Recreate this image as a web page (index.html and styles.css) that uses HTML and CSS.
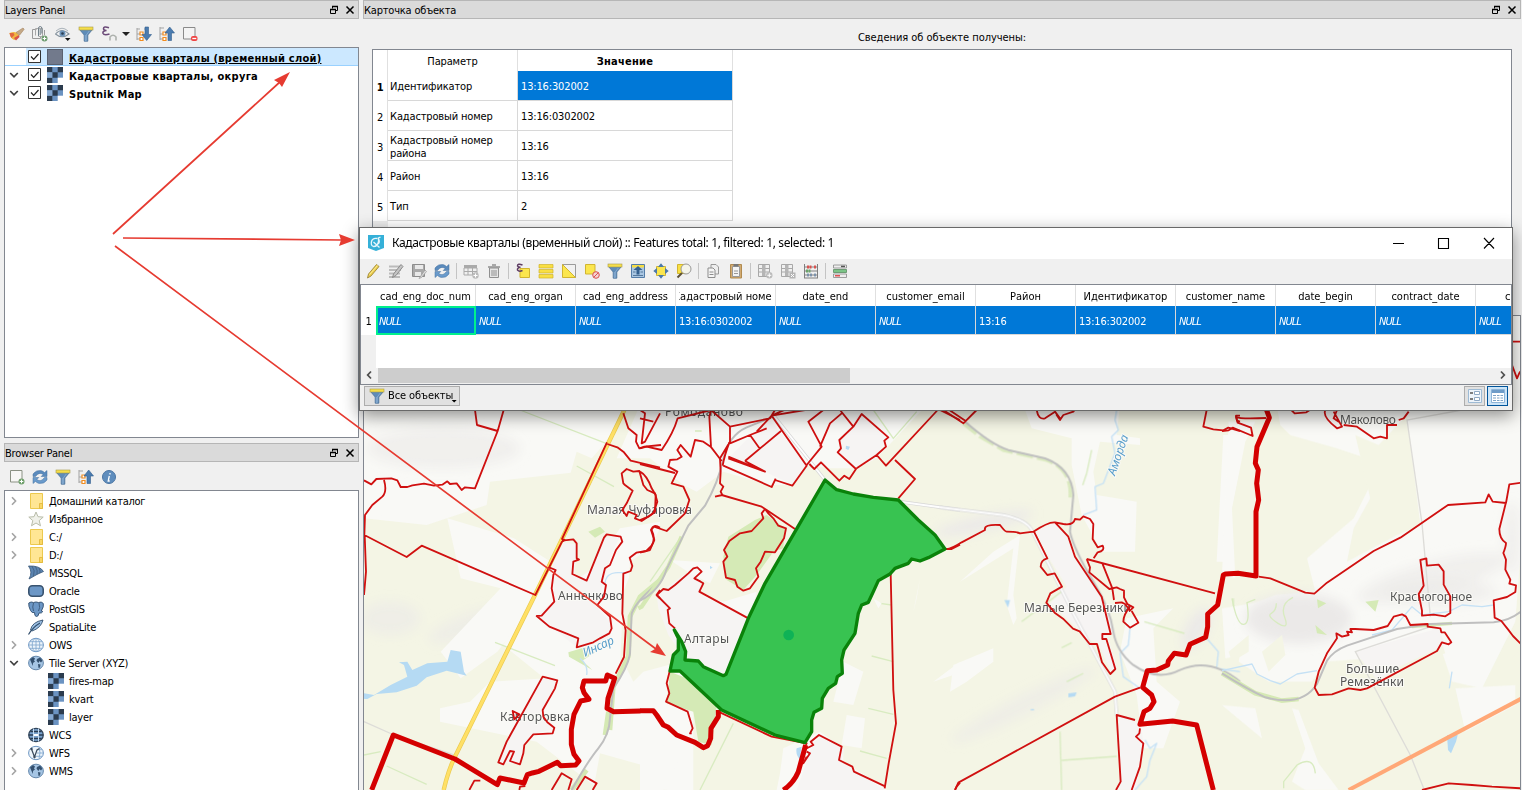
FILE: index.html
```html
<!DOCTYPE html>
<html lang="ru">
<head>
<meta charset="utf-8">
<title>QGIS</title>
<link rel="stylesheet" href="styles.css">
</head>
<body>
<svg class="defs" width="0" height="0">
  <defs>
    <symbol id="funnel" viewBox="0 0 16 16"><path d="M1.5 3.5L6.2 9v6.2h3.6V9l4.7-5.500z" fill="#5f8cb8" stroke="#4a7199" stroke-width=".8"/><path d="M7.300 9v5.500h1V9l3-4" fill="none" stroke="#8fb3d6" stroke-width=".8"/><rect x="1" y="1" width="14" height="3" fill="#f5de4a" stroke="#a79a4a" stroke-width=".6"/></symbol>
    <symbol id="refresh" viewBox="0 0 16 16"><path d="M1 7.500V5Q4 .8 9 1.600q2 .4 3.500 2L15 1.500v6H9.200l2-2Q7 2.500 3.500 7.500z" fill="#5b8bbd" stroke="#44719f" stroke-width=".5"/><path d="M15 8.500V11q-3 4.200-8 3.400-2-.4-3.500-2L1 14.500v-6h5.800l-2 2q4.200 3 7.700-2z" fill="#6a9bcc" stroke="#44719f" stroke-width=".5"/></symbol>
    <symbol id="tiles" viewBox="0 0 16 16"><rect width="16" height="16" fill="#6b93c2"/><path d="M0 0h5.300v5.300H0zM10.700 0H16v5.300h-5.300zM5.300 5.300h5.400v5.400H5.300zM0 10.700h5.300V16H0z" fill="#2b3b4e"/><path d="M0 5.300h5.300v5.400H0z" fill="#86a9d2"/><path d="M10.700 10.700H16V16h-5.300z" fill="#fff"/></symbol>
    <symbol id="folder" viewBox="0 0 16 16"><path d="M2.500.5h12v15h-12z" fill="#ffe694" stroke="#ecc94e"/><path d="M11.500 10.500h3v5h-3z" fill="#f9d765" stroke="#dfb538" stroke-width=".8"/></symbol>
    <symbol id="star" viewBox="0 0 16 16"><path d="M8 1l2 4.700 5.200.4-4 3.500 1.300 5.200L8 12l-4.500 2.800 1.300-5.200-4-3.500L6 5.700z" fill="#f0f1ea" stroke="#b9bdaa"/></symbol>
    <symbol id="mssql" viewBox="0 0 16 16"><path d="M.5 1Q12 .5 15.500 6.500 10 8.500 1 14 5 7 .5 1z" fill="#5b84b1" stroke="#3a5877" stroke-width=".8"/><path d="M4 1q3.500 4.500 1.500 10M7.500 1.600q2.500 4 1.500 7.800M11 3q1.500 3 1 5" fill="none" stroke="#3a5877" stroke-width=".7"/></symbol>
    <symbol id="oracle" viewBox="0 0 16 16"><rect x=".8" y="2.800" width="14.400" height="10.400" rx="3.500" fill="#6c97c6" stroke="#39536f" stroke-width="1.600"/></symbol>
    <symbol id="postgis" viewBox="0 0 16 16"><path d="M.8 2Q3 .3 5.500 1.500q2.500-1 5 0 3-1.300 4.800 1 .8 3-2 7.500l1.500.5q-1 2-3.800 1.500-.5 3.500-2.500 3.500-2 0-2-4-2.500 1-4-2Q.3 5 .8 2z" fill="#6c97c6" stroke="#3b5878"/><path d="M5.500 2q-1.500 4 0 8M11 2q1.500 5-.5 8" fill="none" stroke="#3b5878" stroke-width=".9"/></symbol>
    <symbol id="feather" viewBox="0 0 16 16"><path d="M2.500 11Q4 3 15 1q-2 8-11 11z" fill="#9dc0e4" stroke="#304d6c" stroke-width=".9"/><path d="M.5 15.500Q5 8 12 4" fill="none" stroke="#304d6c" stroke-width="1.200"/></symbol>
    <symbol id="globe" viewBox="0 0 16 16"><ellipse cx="8" cy="8" rx="7.400" ry="6.700" fill="#eef5fb" stroke="#6c95c2"/><path d="M.8 8h14.400M2 4.700h12M2 11.300h12M8 1.300v13.400" fill="none" stroke="#7ba3cc" stroke-width=".8"/><ellipse cx="8" cy="8" rx="3.800" ry="6.700" fill="none" stroke="#7ba3cc" stroke-width=".8"/></symbol>
    <symbol id="globe2" viewBox="0 0 16 16"><ellipse cx="8" cy="8" rx="7.400" ry="6.800" fill="#a5c5e4" stroke="#6487ab"/><path d="M2 4.500L5 2l2 1.500L6 5.500l1 1L5 8v3L3.500 8zM9 4l3-1.500 2.500 3-1.500 2-1.500-1.500L10.500 8l-1-1L8.500 5.500zM10 9l2.500.5-.5 3-1.500.5z" fill="#33506f"/></symbol>
    <symbol id="wcs" viewBox="0 0 16 16"><ellipse cx="8" cy="8" rx="7.300" ry="6.700" fill="#7ba4d0" stroke="#33465b" stroke-width="1.300"/><path d="M1 8h14M2.500 4.500h11M2.500 11.500h11" stroke="#2b3d52" stroke-width="1.600"/><path d="M5.500 1.500v13M10.500 1.500v13" stroke="#c7dcf0"/><path d="M6 7h4v2H6z" fill="#fff"/></symbol>
    <symbol id="wfs" viewBox="0 0 16 16"><ellipse cx="8" cy="8" rx="7.400" ry="6.700" fill="#eef5fb" stroke="#6c95c2"/><path d="M9 8h6M9 4.700h5M8 11.300h6M11 2.500q2 5 0 11" fill="none" stroke="#7ba3cc" stroke-width=".8"/><path d="M3.500 4l3 8 2.500-7 2.500-1.500" fill="none" stroke="#3a4a5c" stroke-width="1.200"/><circle cx="3.500" cy="4" r="1.200" fill="#3a4a5c"/><circle cx="6.500" cy="12" r="1.200" fill="#3a4a5c"/></symbol>
    <symbol id="expand" viewBox="0 0 16 16"><path d="M1 2v12M1 3h3M1 8h3M1 13h3M8 3h2M8 8h2" fill="none" stroke="#a3a3a3"/><path d="M4 6h3v3H4zM4 11.500h3v3H4z" fill="#fff" stroke="#f28c1e" stroke-width="1.200"/><path d="M9 1h3.500v7.500H15.500L10.700 14.500 6 8.500h3z" fill="#4b7cb0" stroke="#345f8e" stroke-width=".6"/></symbol>
    <symbol id="collapse" viewBox="0 0 16 16"><path d="M1 1v13M1 2h4M1 8h3M1 13h3" fill="none" stroke="#a3a3a3"/><path d="M4 6h3v3H4zM4 11.500h3v3H4z" fill="#fff" stroke="#f28c1e" stroke-width="1.200"/><path d="M9 14.500h3.500V7H15.500L10.700 1 6 7h3z" fill="#4b7cb0" stroke="#345f8e" stroke-width=".6"/></symbol>
    <symbol id="brush" viewBox="0 0 16 16"><path d="M.5 7q4-1.500 7-.5l2.500 3L6.500 14q-4 0-5.500-5z" fill="#f1b640"/><path d="M.5 7h4l1 2-3 3Q1 10 .5 7z" fill="#e0683f"/><path d="M5 12l5-3 .5 2L7 14.500z" fill="#d9534a"/><path d="M7 6.500L14 2l1.200 1.200-4.700 6z" fill="#c5a988" stroke="#a5855f" stroke-width=".6"/></symbol>
    <symbol id="addgroup" viewBox="0 0 16 16"><path d="M4.500 3.500h-4v9h8V11" fill="none" stroke="#9a9a9a"/><path d="M3.500 9.500V2.500h7v8h-4" fill="none" stroke="#a8a8a8"/><path d="M6.500 10V2.500q0-2 1.700-2t1.700 2v5M8.200 3v6" fill="none" stroke="#6f7f88"/><path d="M12.500 4v5" stroke="#999"/><circle cx="12.500" cy="12.500" r="3" fill="#6e9b6e"/><path d="M12.500 10.700v3.600M10.700 12.500h3.600" stroke="#fff"/></symbol>
    <symbol id="eye" viewBox="0 0 16 16"><path d="M.5 8Q7 1 14 8 7 13.500.5 8z" fill="#f2f2f2" stroke="#85939e" stroke-width="1.100"/><circle cx="7.500" cy="7.500" r="3" fill="#6c93b9"/><circle cx="7.500" cy="7.500" r="1.300" fill="#2c3e52"/><path d="M1 5q6-5.500 12 0" fill="none" stroke="#aab3ba"/><path d="M10 12h5.500L12.700 15z" fill="#111"/></symbol>
    <symbol id="eps" viewBox="0 0 16 16"><path d="M8 1.800Q2.500-.2 2.500 2.800q.3 1.700 3 1.700Q1.500 5 2 7.200q1 2.600 6.500.8" fill="none" stroke="#6b4a78" stroke-width="1.600"/><path d="M9 14.500V11q3-3.500 6 0v3.500" fill="none" stroke="#aeb2ae" stroke-width="1.600"/></symbol>
    <symbol id="remove" viewBox="0 0 16 16"><path d="M1.500 1.500h11.500v11.500H1.500z" fill="#f4f4f4" stroke="#8a8a8a"/><rect x="9" y="10" width="6.500" height="5" rx="2" fill="#ef4444"/><path d="M10.300 12.500h4" stroke="#fff" stroke-width="1.300"/></symbol>
    <symbol id="addsel" viewBox="0 0 16 16"><path d="M1.500 1.500h11.500v11.500H1.500z" fill="#f7f7f5" stroke="#8a9183"/><circle cx="12.500" cy="12.500" r="3" fill="#6e9f6a"/><path d="M12.500 10.700v3.600M10.700 12.500h3.600" stroke="#fff"/></symbol>
    <symbol id="pencil" viewBox="0 0 16 16"><path d="M2.500 15l1-4L11.500 1.500l2.500 2-8 9.500z" fill="#edcf4b" stroke="#9e873a" stroke-width=".9"/><path d="M4.500 11.500L12.500 2.500" stroke="#fbeb99"/></symbol>
    <symbol id="edits" viewBox="0 0 16 16"><path d="M1 3.500h13M1 7h12M1 10.500h11M1 14h11" stroke="#bbb" stroke-width="2.200"/><path d="M4.500 14.500l1-3.500 7.500-9.500L15 3.500l-7 9z" fill="#c4c4c4" stroke="#858585" stroke-width=".9"/></symbol>
    <symbol id="save" viewBox="0 0 16 16"><path d="M1.500 1.500h12v12h-12z" fill="#a9a9a9" stroke="#8d8d8d"/><path d="M4 2h8v4H4zM4 9h6v4H4z" fill="#e9e9e9"/><path d="M8 15.500l6-8.500 1.500 1.500-5 6z" fill="#ddd" stroke="#999" stroke-width=".7"/></symbol>
    <symbol id="tableadd" viewBox="0 0 16 16"><path d="M1 2h13v3H1z" fill="#aaa"/><path d="M1 5h13v7H1zM1 8.500h13M5 5v7M9.500 5v7" fill="none" stroke="#aaa"/><circle cx="12.500" cy="12.500" r="3.200" fill="#bbb"/><path d="M12.500 10.500v4M10.500 12.500h4" stroke="#fff"/></symbol>
    <symbol id="trash" viewBox="0 0 16 16"><path d="M3.500 5h9v9.500h-9zM6 7v6M8 7v6M10 7v6" fill="#e6e6e6" stroke="#909090"/><path d="M2 4h12M6 2h4" stroke="#909090" stroke-width="1.500"/></symbol>
    <symbol id="epsy" viewBox="0 0 16 16"><path d="M5 5.500h9.500v9H5z" fill="#fbe64e" stroke="#d1b530"/><path d="M7.500 2Q2.500 0 2.500 3q.5 1.300 3 1.300Q2 4.800 2.500 7q1.500 2 5 .5" fill="none" stroke="#5d3b62" stroke-width="1.500"/></symbol>
    <symbol id="selall" viewBox="0 0 16 16"><path d="M1 1.500h14V5H1zM1 6.500h14V10H1zM1 11.500h14V15H1z" fill="#f9df42" stroke="#cfb32c" stroke-width=".7"/></symbol>
    <symbol id="invert" viewBox="0 0 16 16"><path d="M1.500 1.500h13v13z" fill="#f1f1f1" stroke="#9b9b9b"/><path d="M1.500 1.500v13h13z" fill="#fbe64e" stroke="#d1b530"/></symbol>
    <symbol id="desel" viewBox="0 0 16 16"><path d="M1.500 1.500h9.500v9.500H1.500z" fill="#fbe64e" stroke="#d1b530"/><circle cx="12" cy="12" r="3.300" fill="#f6d2d2" stroke="#d9534f"/><path d="M9.700 14.300l4.600-4.600" stroke="#d9534f"/></symbol>
    <symbol id="movetop" viewBox="0 0 16 16"><path d="M1.500 1.500h13v13h-13z" fill="#a9c6e2" stroke="#547da8"/><path d="M2 2h12v2.500H2z" fill="#f5dc45"/><path d="M8 3l4.500 4H9.500v4.500h-3V7h-3z" fill="#335f8e"/><path d="M3 9h2.500M10.500 9H13M3 12.500h10" stroke="#55789c"/></symbol>
    <symbol id="pan" viewBox="0 0 16 16"><path d="M3.500 3.500h9v9h-9z" fill="#fbe64e" stroke="#d1b530"/><path d="M8 .3l3 3.700H5zM8 15.700L11 12H5zM.3 8L4 5v6zM15.700 8L12 5v6z" fill="#4d79a8"/></symbol>
    <symbol id="zoomsel" viewBox="0 0 16 16"><path d="M1.500 1.500h8v9h-8z" fill="#f9df42" stroke="#d1b530"/><circle cx="10" cy="6" r="5" fill="#f4f4ea" stroke="#999"/><path d="M6 10L1.500 14.500" stroke="#5c5138" stroke-width="2"/></symbol>
    <symbol id="copy" viewBox="0 0 16 16"><path d="M6 1.500h5l2.500 2.500v7H6z" fill="#eee" stroke="#999"/><path d="M3 5h5l2 2v7.500H3zM4.500 9h4M4.500 11.500h4" fill="#f5f5f5" stroke="#8d8d8d"/></symbol>
    <symbol id="paste" viewBox="0 0 16 16"><path d="M2.500 1.500h11v13.500h-11z" fill="#d2ab72" stroke="#b08a50"/><path d="M4.500 3.500h7v10h-7zM6 8h4M6 10.500h4" fill="#f4f4f4" stroke="#999"/><path d="M5.500 1h5v2.500h-5z" fill="#777"/></symbol>
    <symbol id="coladd" viewBox="0 0 16 16"><path d="M1.500 1.500h11v12h-11zM5.500 2v11M1 5.500h12M1 9h12" fill="none" stroke="#a8a8a8"/><path d="M5 2h3.500v11H5z" fill="#b5b5b5"/><circle cx="12.300" cy="12.300" r="3.200" fill="#bbb"/><path d="M12.300 10.300v4M10.300 12.300h4" stroke="#fff"/></symbol>
    <symbol id="coldel" viewBox="0 0 16 16"><path d="M1.500 1.500h11v12h-11zM5.500 2v11M1 5.500h12M1 9h12" fill="none" stroke="#a8a8a8"/><path d="M5 2h3.500v11H5z" fill="#b5b5b5"/><path d="M9.500 9.500h6v6h-6z" fill="#b5b5b5"/><path d="M11 11l3 3M14 11l-3 3" stroke="#fff"/></symbol>
    <symbol id="abacus" viewBox="0 0 16 16"><path d="M1.500 1v14M14.500 1v14M1 4h14M1 8h14M1 12h14M1 15h14" stroke="#808080"/><path d="M5 2.500v3M7.500 2.500v3M12 2.500v3" stroke="#d9534f" stroke-width="2"/><path d="M4 6.500v3M6.500 6.500v3" stroke="#6aa36a" stroke-width="2"/><path d="M5 10.500v3M8 10.500v3M12 10.500v3" stroke="#6985a5" stroke-width="1.500"/></symbol>
    <symbol id="cond" viewBox="0 0 16 16"><path d="M1.500 2h13v3h-13z" fill="#eee" stroke="#888" stroke-width=".8"/><path d="M1.500 6.500h13v3h-13z" fill="#7cc487" stroke="#5a8b62" stroke-width=".8"/><path d="M1.500 11h13v3.500h-13z" fill="#eee" stroke="#888" stroke-width=".8"/><path d="M3 12h5v1.500H3z" fill="#e05050"/><path d="M9 2.700h4v1.500H9z" fill="#555"/></symbol>
    <symbol id="info" viewBox="0 0 16 16"><circle cx="8" cy="8" r="6.500" fill="#5f8dbd" stroke="#4a75a3"/><path d="M9 4v1.500M8.300 7l-1.100 5h1.500" fill="none" stroke="#fff" stroke-width="1.300"/></symbol>
    <symbol id="float" viewBox="0 0 10 10"><path d="M3.500 3.500v-2h5v4H7" fill="none" stroke="#000"/><path d="M3 1.500h6" stroke="#000" stroke-width="1.500"/><path d="M1.500 4.500h5v4h-5z" fill="none" stroke="#000"/><path d="M1 4.500h6" stroke="#000" stroke-width="1.500"/></symbol>
    <symbol id="close" viewBox="0 0 10 10"><path d="M1.500 1.500l7 7M8.500 1.500l-7 7" stroke="#000" stroke-width="1.500"/></symbol>
    <symbol id="check" viewBox="0 0 14 14"><path d="M.5.5h12v12H.5z" fill="#fff" stroke="#333"/><path d="M3 6.500l2.700 2.800L10.500 4" fill="none" stroke="#222" stroke-width="1.200"/></symbol>
    <symbol id="open" viewBox="0 0 10 10"><path d="M1.200 3L5 6.800 8.800 3" fill="none" stroke="#3f3f3f" stroke-width="1.700"/></symbol>
    <symbol id="shut" viewBox="0 0 10 10"><path d="M3 1.200L6.600 5 3 8.800" fill="none" stroke="#a4a4a4" stroke-width="1.600"/></symbol>
    <symbol id="shutdark" viewBox="0 0 10 10"><path d="M3.500 1.500L6.800 5 3.500 8.500" fill="none" stroke="#505050" stroke-width="1.800"/></symbol>
    <filter id="soft" x="-30%" y="-30%" width="160%" height="160%"><feGaussianBlur stdDeviation="16"/></filter>
  </defs>
</svg>

<div class="app">
  <aside class="left">
    <section class="panel layers">
      <header class="dock-title"><span>Layers Panel</span><svg><use href="#float"/></svg><svg><use href="#close"/></svg></header>
      <div class="tools">
        <i><svg><use href="#brush"/></svg></i><i><svg><use href="#addgroup"/></svg></i><i><svg><use href="#eye"/></svg></i><i><svg><use href="#funnel"/></svg></i><i><svg><use href="#eps"/></svg></i><b class="drop"></b><i><svg><use href="#expand"/></svg></i><i><svg><use href="#collapse"/></svg></i><i><svg><use href="#remove"/></svg></i>
      </div>
      <ul class="tree layer-tree">
        <li class="on"><svg class="arr"></svg><svg class="chk"><use href="#check"/></svg><em class="fill"></em><span>Кадастровые кварталы (временный слой)</span></li>
        <li><svg class="arr"><use href="#open"/></svg><svg class="chk"><use href="#check"/></svg><svg class="ico"><use href="#tiles"/></svg><span>Кадастровые кварталы, округа</span></li>
        <li><svg class="arr"><use href="#open"/></svg><svg class="chk"><use href="#check"/></svg><svg class="ico"><use href="#tiles"/></svg><span>Sputnik Map</span></li>
      </ul>
    </section>
    <section class="panel browser">
      <header class="dock-title"><span>Browser Panel</span><svg><use href="#float"/></svg><svg><use href="#close"/></svg></header>
      <div class="tools">
        <i><svg><use href="#addsel"/></svg></i><i><svg><use href="#refresh"/></svg></i><i><svg><use href="#funnel"/></svg></i><i><svg><use href="#collapse"/></svg></i><i><svg><use href="#info"/></svg></i>
      </div>
      <ul class="tree">
        <li><svg class="arr"><use href="#shut"/></svg><svg class="ico"><use href="#folder"/></svg><span>Домашний каталог</span></li>
        <li><svg class="arr"></svg><svg class="ico"><use href="#star"/></svg><span>Избранное</span></li>
        <li><svg class="arr"><use href="#shut"/></svg><svg class="ico"><use href="#folder"/></svg><span>C:/</span></li>
        <li><svg class="arr"><use href="#shut"/></svg><svg class="ico"><use href="#folder"/></svg><span>D:/</span></li>
        <li><svg class="arr"></svg><svg class="ico"><use href="#mssql"/></svg><span>MSSQL</span></li>
        <li><svg class="arr"></svg><svg class="ico"><use href="#oracle"/></svg><span>Oracle</span></li>
        <li><svg class="arr"></svg><svg class="ico"><use href="#postgis"/></svg><span>PostGIS</span></li>
        <li><svg class="arr"></svg><svg class="ico"><use href="#feather"/></svg><span>SpatiaLite</span></li>
        <li><svg class="arr"><use href="#shut"/></svg><svg class="ico"><use href="#globe"/></svg><span>OWS</span></li>
        <li><svg class="arr"><use href="#open"/></svg><svg class="ico"><use href="#globe2"/></svg><span>Tile Server (XYZ)</span></li>
        <li class="sub"><svg class="ico"><use href="#tiles"/></svg><span>fires-map</span></li>
        <li class="sub"><svg class="ico"><use href="#tiles"/></svg><span>kvart</span></li>
        <li class="sub"><svg class="ico"><use href="#tiles"/></svg><span>layer</span></li>
        <li><svg class="arr"></svg><svg class="ico"><use href="#wcs"/></svg><span>WCS</span></li>
        <li><svg class="arr"><use href="#shut"/></svg><svg class="ico"><use href="#wfs"/></svg><span>WFS</span></li>
        <li><svg class="arr"><use href="#shut"/></svg><svg class="ico"><use href="#globe2"/></svg><span>WMS</span></li>
      </ul>
    </section>
  </aside>

  <main class="right">
    <header class="dock-title"><span>Карточка объекта</span><svg><use href="#float"/></svg><svg><use href="#close"/></svg></header>
    <p class="status">Сведения об объекте получены:</p>
    <div class="card">
      <div class="params">
        <div class="n"></div><div class="h">Параметр</div><div class="h strong">Значение</div>
        <div class="n strong">1</div><div class="c">Идентификатор</div><div class="c v sel">13:16:302002</div>
        <div class="n">2</div><div class="c">Кадастровый номер</div><div class="c v">13:16:0302002</div>
        <div class="n">3</div><div class="c">Кадастровый номер района</div><div class="c v">13:16</div>
        <div class="n">4</div><div class="c">Район</div><div class="c v">13:16</div>
        <div class="n">5</div><div class="c">Тип</div><div class="c v">2</div>
        <div class="rest"></div>
      </div>
    </div>
    <div class="map">
      <svg viewBox="364 316 1157 474" width="1157" height="474">
        <rect x="364" y="316" width="1157" height="474" fill="#f4f5e5"/>
        <!-- north-west sheet -->
        <g transform="translate(360 405) scale(.33333)">
          <path class="pale" d="M0-300h790v330l-60 90-70 80-270 30-10 70-180 60-188-20z"/>
          <g filter="url(#soft)"><ellipse class="hill faint" cx="250" cy="130" rx="230" ry="60"/><ellipse class="hill faint" cx="90" cy="640" rx="90" ry="50"/><ellipse class="hill faint" cx="330" cy="660" rx="130" ry="35" transform="rotate(-20 330 660)"/></g>
          <path class="pale" d="M262 340l200 60 110 70-90 180-70 90-110 80-60-80 180-190-120-30zM100 270l20 70h-60zM150 260l15 80-50-10z"/>
          <path class="pale" d="M430 700l90 50 120-40 150 60 30 60 30-30 150-40 0 400-300-20-170-130-290-60 0-40 90-20 60-60 170-10 60-40z"/>
          <path class="pale" d="M610 400l100-20 60-130 130 30v90l-30 60-60 40-20 300-200 80-160-130z"/>
          <path class="field" d="M570 420l80 20-10 90 60-40 80-120 120-20v-80l-180-100-70-30zM790 560l-10 230 30-80 90-150V460l-90 50z"/>
          <path class="urban" d="M606 410l45 10-10 90 40 17 52-129 50-8-30 60-30 110-10 50 40 45-10 50-90 25-85-70-35-30 50-45-5-110z"/>
          <path class="urban" d="M548 815l44 11-44 89 14 37 20 20-60 15-30 35-12 56-65-6 25-62z"/>
          <path class="field" d="M720 1045l180 50v60H700z"/>
          <path class="water" d="M12 865l30 5 50-30 50-25-10-35-15-8 25-2 15 25 45-20 60-5 10-35 30 5 10 60 8 12-60-15-60 20-30 25-60 20-60 5-28 15-20-1z"/>
          <path class="wood" d="M625 742l50-15 30 15-38 25 30 28-70-40zM685 380l35-15 15 15-30 18z"/>
          <path class="green" d="M480 15l310 120M650 183l112 62M405 712l180 70M12 1050l50-10M80 1083l120 55"/>
          <path class="field2" d="M12 950l90 40 180 60"/>
          <path class="stream" d="M660 760q25 20 20 50M735 540q0-40 45-37h15"/>
          <path d="M900 525l-60 50-30 60-5 120-45 90-10 130M745 920l-10 70M635 1155l45-60" fill="none" stroke="#d5e9b4" stroke-width="14"/>
          <path class="rail" d="M900 530q-70 55-85 95l-5 120q-5 40-50 105l-10 90q-2 50-35 90t-80 125"/>
          <path d="M793 15L525 570 285 1055q-20 40-34 100" fill="none" stroke="#e9c94e" stroke-width="13"/><path d="M793 15L525 570 285 1055q-20 40-34 100" fill="none" stroke="#ffe066" stroke-width="9"/>
        </g>
        <!-- centre sheet -->
        <g transform="translate(640 405) scale(.33333)">
          <path class="pale" d="M0 0h860l-150 160-60 30-80 0-70-10-50 60-60 0-140-40-80 60-40-20-100-80-100 0z"/>
          <path class="urban" d="M265 160l120-120 120 140-45 60-85-40zM600 110l60-85 80 75-30 60-70 30-40-45zM50 570l80-60 50-10 5 70 140 70-70 170-120-50-50-70-30-80z"/>
          <path class="pale" d="M90 465l150 10-30 60-60-30zM350 560l-100 30-70-20 150 70z"/>
          <path class="pale" d="M430 1030l110-50 70 50v40l120 75 10 10H410l10-50zM0 1000l130 40-60 115H0zM610 770l60 30-30 100-60-10zM620 930l55 10-10 90-60-10z"/>
          <path class="urban" d="M470 1155l50-140 25-25 68 40-10 40 130 85z"/>
          <path class="wood" d="M90 800l50 20 90 80-15 120-40-10-15-90-80-25zM380 330l55 40-5 60-30 10-50 70-40 45-50-30-10-70 15-60 80-50z"/>
          <path class="green" d="M700 15l60 85 70-80M280 955l-100 200M165 78h20M120 400l-90 130M695 753l65 17M685 910l75 18M660 1038l80 22M720 595l35 5"/>
          <path class="pale" d="M960 770l-80 60 60-20zM700 580l25 15-10 15zM840 520l-20 100 10-40z"/>
          <path class="roadg" d="M400 30l155 195M780 290l180 25"/><path class="roadw" d="M400 30l155 195M780 290l180 25"/>
          <path d="M125 395l-40 90-80 120-10 5" fill="none" stroke="#d5e9b4" stroke-width="13"/>
          <path class="rail" d="M0 587q60-30 80-95l65-130 50-60q40-70 55-140t70-95l80-32"/>
          <path class="water" d="M618 122l12 3-5 10-8-4zM210 482l8 6-8 4zM470 1030l15-5-5 30 5 15q-20-20-15-40z"/>
        </g>
        <!-- east-centre sheet -->
        <g transform="translate(940 405) scale(.33333)">
          <path class="pale" d="M250 0h290l-10 90 70 10v20l-120-10-20 90 10 70 120 20-5 150-100 0-60-110-30-150 0-80-120-30zM850 90h20l-10 300 10 80h-40zM60 530l100-90 80-50-20 180 10 70-10 20-20-60 20-170zM30 860l10-80 120-50 0 40-80 60z"/>
          <path class="pale" d="M560 640l140-30-60 60 10 160 70 60-50 140-60 0-20-160-50-130z"/>
          <g filter="url(#soft)"><ellipse class="hill" cx="130" cy="355" rx="150" ry="22" transform="rotate(-12 130 355)"/><ellipse class="hill faint" cx="250" cy="900" rx="240" ry="28" transform="rotate(-27 250 900)"/><ellipse class="hill" cx="770" cy="670" rx="30" ry="70" transform="rotate(30 770 670)"/></g>
          <path class="urban" d="M285 380l60-30 40 45 20 60 80 120 40 110-25 0 30 100-15 20-40-90-25-10-120-110 50-50-50-80zM535 930l65 25 10 60-20 140h-60l10-20z"/>
          <path class="green" d="M455 135l-15 70-12 35M245 650l120-90M365 728l30-15M613 650l120 35M360 980l5 175M365 1066l165-12M880 580q0 60 20 75M380 830l50-25"/>
          <path d="M70 55l50 40 70 40 130 30q80 30 70 120" fill="none" stroke="#dbeac0" stroke-width="11" stroke-dasharray="50 12"/>
          <path class="stream" d="M530 15l-5 30 10 30-20 20 10 50-35 90-25 10 5 70-40 15M570 670l-5 50-25 25 10 70 50 35M800 700l35 40-5 50 70 10M615 1005l15 25 20-15-20 50-10 50-35 40"/>
          <path class="water" d="M193 585h17l-6 23zM385 865l25-3-5 12-20 3zM272 912h10v4h-10z"/>
          <path class="roadg" d="M0 307l190 23q70 15 85 45l130 260 120 225 5 70"/><path class="roadw" d="M0 307l190 23q70 15 85 45l130 260 120 225 5 70"/>
          <path class="rail" d="M75 50q80 70 130 85l110 25q80 30 85 110l-10 110q10 50 70 150 50 80 60 150 10 60 60 100 70 50 140 15 90-40 180 35"/>
        </g>
        <!-- east sheet -->
        <g transform="translate(1222 405) scale(.33333)">
          <path class="pale" d="M110-290h790v680l-20 260-100 200-90-20-40-120-200 50-140 10-40 60-130 0-90-60 30-170 80-30 120-10-25-100 140-120 50-100-10-80-90-30-140-40-30-30zM20 50h80l-30 60-40 200 10 210-40-10z"/>
          <path class="pale" d="M0 610l180-30-60 80-60 90-50 10zM210 910l40 120-40 100 40 25h100l-60-80-60-160zM0 900l100 10 20 90zM700 850l180-10v60l-150 80z"/>
          <path class="field" d="M400 90l70 30 85-90 40 330-70 30-150 80 20-100 50-90z"/>
          <g filter="url(#soft)"><ellipse class="hill" cx="230" cy="640" rx="160" ry="75"/><ellipse class="hill faint" cx="630" cy="520" rx="230" ry="50" transform="rotate(-15 630 520)"/><ellipse class="hill faint" cx="650" cy="560" rx="170" ry="40"/><ellipse class="hill faint" cx="870" cy="400" rx="25" ry="110"/></g>
          <path class="field" d="M600 700l50-15 20 60-60 20zM870 760l30-30v70zM120 740l60-50 10 60-50 50zM20 740l60-50 0 50-50 30z"/>
          <path class="urban" d="M400 740l250-70 20 50-150 70-50 40z"/>
          <path class="wood" d="M285 583l28 12-25 15zM430 590l40-5-10 35zM280 660l35 30-30-5z"/>
          <path class="green" d="M30 580q15 80 35 78t10-65l25-10M213 577q-40 20-25 60t-20 18-20-30 15-30M185 1150l0-20 40-50q50-30 55 25"/>
          <path class="field2" d="M720 15L555 45l45 310 25 280M640 660L400 740l165 310 40 100"/>
          <path class="stream" d="M0 797l90-20 15 30 40 20 30 10 50-30 60-10M450 690l60-15 60-70 30 25 80-10 40-20 60 5 35-5M690 800l-8 50"/>
          <path d="M0 805l100 60 80 22 50-5" fill="none" stroke="#d5e9b4" stroke-width="14"/><path d="M570 665l120-10" stroke="#d5e9b4" stroke-width="10"/>
          <path class="rail" d="M0 805q80 50 130 72 110 30 155-40l30-70q20-30 60-45l150-50 100-15 190-5q50-5 85-35"/>
          <path class="water" d="M675 990h32l-5 20-15 35-9-10z"/>
          <path d="M380 1155L900 880" fill="none" stroke="#ffa877" stroke-width="12"/>
        </g>
        <g class="places">
          <text x="665" y="416" textLength="78">Ромоданово</text>
          <text x="587" y="514" textLength="105">Малая Чуфаровка</text>
          <text x="558" y="600" textLength="65">Анненково</text>
          <text x="500" y="721" textLength="70">Кавторовка</text>
          <text x="684" y="643" textLength="45">Алтары</text>
          <text x="1024" y="612" textLength="107">Малые Березники</text>
          <text x="1340" y="424" textLength="56">Маколово</text>
          <text x="1390" y="601" textLength="82">Красногорное</text>
          <text x="1346" y="673" textLength="53">Большие</text>
          <text x="1340" y="686" textLength="64">Ремезёнки</text>
          <text class="river" transform="translate(585 657) rotate(-25)" textLength="33">Инсар</text>
          <text class="river" transform="translate(1115 476) rotate(-71)" textLength="42">Аморда</text>
        </g>
        <g class="cad" transform="translate(360 405) scale(.33333)">
          <path d="M345 15l6 45 62 18M431 15L413 78 345 250l-30-3-10 8-15-20-20 2-8-8-15 10-25 3-30-6-35 5-15 5-20 0-10-20-18-6-45 2-15 16-22-12M72 225q10 35-5 50l-30 25-22 30-2 60 127 66 45-34 341 148 80-160 8-5-8-3 135-290M14 390l4 110-6 70"/>
          <path d="M742 117l30 10 20 15 20 25 88 21M790 25l15 45 25 20-2 20 10 20 15-5 50-5"/>
          <path d="M790 235L785 205 800 192 820 200 838 198 850 240 862 255 885 265 892 290 880 325 845 348 825 340 830 330 805 320 800 333 787 315 800 295 818 257 795 240z"/>
          <path d="M606 407L640 403 650 415V460L657 464 640 470 637 507 680 527 732 398 740 388 782 395 787 410 768 435 750 480 735 490 725 530 738 540 732 575 712 600 750 635 755 670 748 685 720 700 700 712 650 727 655 700 568 665 530 633 545 632 583 590 575 550 580 510 587 495 567 487"/>
          <path d="M900 368q-20-12-26 5 15 30 0 50l-15 15-30 5-20 15 8 25-5 15-22 8-3 120 10 50-5 80-25 50"/>
          <path d="M548 815L592 826 585 850 548 915 550 935 562 952 583 968 578 985 520 988 493 1020 490 1045 480 1078 450 1068 462 1040 450 1038 430 1078 415 1072 440 1010zM458 918l20 10-15 15zM575 1155l30-50 30 18-10 32M650 1155l25-40 35 20-12 20M328 1155l15-28 18 0M478 1155l2-10 16-2M900 555l-10 15 10 10"/>
        </g>
        <g class="cad" transform="translate(640 405) scale(.33333)">
          <path d="M0 15l15 10-10 90 10-5 45-85M0 130l20-5 45 10q35-50 48-95l100-25M0 40l40 10M213 15l-5 20 5 90M0 177l105 27M0 200q20 10 35 50l12 20-2 50-20 15-25 10"/>
          <path d="M245 168L212 125 190 110 165 105 152 155 122 120 112 135 125 155 112 163 90 165 85 185 112 200 95 235 130 245 148 285 135 325 80 378 42 365 33 375 43 405 30 435 0 443"/>
          <path d="M213 15L270 65l120-25 15-25M270 65v45l-30 50 2 40-2 35 10 10-8 15 5 10-22 5M270 115l60-25 50-20M268 112q-15 40-20 70M265 160L375 200l-60-32M330 90l30 42M315 168l108-90M350 80l45-48 105 150-43 60L405 225M250 182l145 64 12-25M265 155l110 45M395 32l100-17M395 32l55-25M550 15l-45 35 40 75L500 180M540 125l30-70 35-30M600 15l40 50-42 40 5 25-10 12 55 50-20 30-15-10-15 15-55-55-20 20-15-15M640 65l25-38 80 70-12 10 5 18-28 25-60 40M710 150l28 32 155-167M765 165l60 57-50 58M900 15l60 30"/>
          <path d="M245 270L365 305 465 372M385 325L400 340 415 362 438 370 432 400 405 442 375 440 362 470 348 490 355 515 330 550 310 557 292 545 285 525 258 518 250 470 262 455 252 435 268 408 300 385 335 378 370 340 365 325 375 312z"/>
          <path d="M325 640L178 560 190 535 182 530 163 520 185 500 172 487 160 490 145 505 105 540 85 555 70 552 50 570 90 610 83 615 88 655 105 670M90 795l-10 40 8 30-10 25 65 30 15 50-8 15 5 0"/>
          <path d="M915 432l20 0 25-13M752 505l8 350 8 100-22 120-12 75M235 920l160 75 105 20-10 20 30-15-8-10 25-20 68 35-8 40 40 20 5 15 95 45M500 1040l10 5-20 30 10-20"/><path d="M945 1155l5-10 10-12"/>
        </g>
        <g class="cad" transform="translate(940 405) scale(.33333)">
          <path d="M10 15l60 40 40-40M28 15l48 32M290 15q5 30 25 25l30-20 15 20-10-10 10 15 10-15 30-10 10-15M800 15l-10 50 30 8 30 3 15-8 35 10M900 32h-12l3 15 9 3"/>
          <path d="M15 432q15 3 50-20l70-37q-5-18 45-15 15 20 20 20 30 0 40 5l40-5q45-30 65-28l25 5q30 5 35-15l15 2 10-10 20 8 10 15-2 45 15 25 15-5q8 15-15 20l-12 18M282 380l40 80q-20 5-20 25l20 25 22-5 22 40-35 20-12 28 25 30 25 18 30 30 20 8 30 38 22 0 15 55 25 35 15-15-27-90-12 0v-15h25L485 575 405 455 385 395 345 352M440 462l385 103M440 462l10 25-2 15 60 50 22-5 10 5 12 5 0 20 10 20 18 10-10 10-15-20-10-5-20 2M487 475l30 75 5 35M570 605q-20 25-20 45l20 18 25-15-20-35M45 1155l10-22 470-258 75-27M585 945l-55-15 12 200-14 25M600 970l-2 15-10 10 22 20-10 70-25 70"/>
        </g>
        <g class="cad" transform="translate(1222 405) scale(.33333)">
          <path d="M0 78l20-2 12-8 60 25-5-25-40-15-5-18q10 8 90 4M208 15l10 10 35-3 15-10M310 15q-10 20 35 55l15-5-25-45M345 15l-10 25 15 10M365 60l40 5 50 35 20-5 20 5v-40l30 0M530 45l15-5 15-20"/>
          <path d="M110 515l35 5 105 43 27 3 38-33 140-95 80-40 143-98 112-8 10-24 12 22 40 4 10-56 35-5M852 292l-20 80q0 30 20 42 0 10-8 30l8 20-2 30 15 30-3 12 20 5-2 20-25 15-40 10 3 52 20 10 20 25 15 20 25 25"/>
          <path d="M595 465l18-5 2 22 35-3 15 20 0 40 20 35 0 50-15 10-35-5-35 3 0-15-10-50 15-25z"/>
          <path d="M343 685L360 695 380 690 375 680 390 682 385 672 400 672 455 675 497 663 515 635 540 628 552 635 565 660 617 657V665L655 670 658 682H668L688 712 680 718 660 712 645 738 435 850 415 855 380 850 330 868 290 870 278 848 290 800 315 745 345 700z"/>
          <path d="M600 1155l80-20 70 5 60 5 90 5M872-190h28M870-120l15 40 8-18 10-10"/>
        </g>
        <g class="okrug">
          <g transform="translate(360 405) scale(.33333)"><path d="M35 1155l65-165 185 72 127 77 8-20 72 15 10-25 15-5 20-5 55-27 10 10 45-2 10-12-15-20-8-30 0-45 8-45 20-40 25-5-15-20-5-15 5-20h65l5-18 22 10-20 60-3 30 20 10 80-2"/></g>
          <g transform="translate(640 405) scale(.33333)"><path d="M0 917L40 917 50 930 70 960 85 967 110 990 165 1012 190 1028 203 1022 212 1000 213 970 235 935V915M497 1020L475 1100Q460 1135 430 1155"/></g>
          <g transform="translate(940 405) scale(.33333)"><path d="M978 10L988 38 951 125 946 175 955 195 950 235 956 285 948 320 948 513 894 505 856 507 850 510 833 600 803 627 803 665 797 697 750 718 738 750 703 745 685 768 683 780 650 795 622 797 608 847 635 870 642 890 630 910 612 920 600 958 698 948 770 960 820 1155"/></g>
        </g>
        <g transform="translate(640 405) scale(.33333)">
          <path class="quarter" d="M555 225L590 254 640 267 700 277 775 285 835 345 885 390 915 432 865 458 840 468 815 462 805 475 765 490 750 507 715 527 700 560 685 592 665 600 655 625 650 655 645 685 612 735 605 765 607 805 592 815 587 835 565 850 547 880 545 910 522 922 515 945V980L495 1013 405 990 245 915 120 798 90 798 100 750 115 735V700L103 675 125 710 137 740 135 765 175 768 190 785 250 812 258 808 325 640 375 535z"/>
          <circle cx="446" cy="690" r="16" fill="#0fb256"/>
        </g>
      </svg>
    </div>
  </main>

  <section class="dialog">
    <header class="win-title">
      <svg class="logo" viewBox="0 0 16 16"><path d="M0 0h16v13l-8 3-8-3z" fill="#35b0d8"/><path d="M9.500 3.500q-5-1-6 3t2 5q4 0 5-5V3l2-1M5.500 7l6 5.500M11 4.500q1 3-.5 4.500" fill="none" stroke="#e8f7fc" stroke-width="1.300"/></svg>
      <span>Кадастровые кварталы (временный слой) :: Features total: 1, filtered: 1, selected: 1</span>
      <svg class="win-btns" viewBox="0 0 110 14"><path d="M0 7.500h11M45.500 2.500h10v10h-10zM91 2l10 10.500M101 2L91 12.500" fill="none" stroke="#000" stroke-width="1.100"/></svg>
    </header>
    <div class="tools">
      <i><svg><use href="#pencil"/></svg></i><i><svg><use href="#edits"/></svg></i><i><svg><use href="#save"/></svg></i><i><svg><use href="#refresh"/></svg></i><u></u>
      <i><svg><use href="#tableadd"/></svg></i><i><svg><use href="#trash"/></svg></i><u></u>
      <i><svg><use href="#epsy"/></svg></i><i><svg><use href="#selall"/></svg></i><i><svg><use href="#invert"/></svg></i><i><svg><use href="#desel"/></svg></i><i><svg><use href="#funnel"/></svg></i><i><svg><use href="#movetop"/></svg></i><i><svg><use href="#pan"/></svg></i><i><svg><use href="#zoomsel"/></svg></i><u></u>
      <i><svg><use href="#copy"/></svg></i><i><svg><use href="#paste"/></svg></i><u></u>
      <i><svg><use href="#coladd"/></svg></i><i><svg><use href="#coldel"/></svg></i><i><svg><use href="#abacus"/></svg></i><u></u>
      <i><svg><use href="#cond"/></svg></i>
    </div>
    <div class="grid-box">
      <div class="attrs">
        <div class="rn"></div><div class="ah">cad_eng_doc_num</div><div class="ah">cad_eng_organ</div><div class="ah">cad_eng_address</div><div class="ah">Кадастровый номер</div><div class="ah">date_end</div><div class="ah">customer_email</div><div class="ah">Район</div><div class="ah">Идентификатор</div><div class="ah">customer_name</div><div class="ah">date_begin</div><div class="ah">contract_date</div><div class="ah">contract</div>
        <div class="rn">1</div><div class="ac null cur">NULL</div><div class="ac null">NULL</div><div class="ac null">NULL</div><div class="ac">13:16:0302002</div><div class="ac null">NULL</div><div class="ac null">NULL</div><div class="ac">13:16</div><div class="ac">13:16:302002</div><div class="ac null">NULL</div><div class="ac null">NULL</div><div class="ac null">NULL</div><div class="ac null">NULL</div>
      </div>
      <div class="gap"></div>
      <div class="scroll"><svg class="flip"><use href="#shutdark"/></svg><div class="track"><div class="thumb"></div></div><svg><use href="#shutdark"/></svg></div>
    </div>
    <footer class="foot">
      <div class="filter"><svg><use href="#funnel"/></svg><span>Все объекты</span><b></b></div>
      <div class="view"><svg viewBox="0 0 14 14"><path d="M.5.5h13v13H.5z" fill="#eef4fa" stroke="#9ebbd5"/><path d="M2 4h3M2 10h3" stroke="#555" stroke-width="1.500"/><path d="M6.500 2.500h5v3h-5zM6.500 8.500h5v3h-5z" fill="#fff" stroke="#8fa9c4"/></svg></div>
      <div class="view active"><svg viewBox="0 0 14 14"><path d="M.5.5h13v13H.5z" fill="#fff" stroke="#8db4d8"/><path d="M1 1h12v3H1z" fill="#6e9cc8"/><path d="M2 6.500h3M6 6.500h2.500M9.500 6.500H12M2 9h3M6 9h2.500M9.500 9H12M2 11.500h3M6 11.500h2.500M9.500 11.500H12" stroke="#7da3c6"/></svg></div>
    </footer>
  </section>

  <svg class="arrows" viewBox="0 0 1522 790">
    <g fill="none" stroke="#e63b31" stroke-width="1.700"><path d="M113 234L281 81M123 238l218 2M115 246l541 403"/></g>
    <g fill="#e63b31"><path d="M290 72l-8 15-3-4-5-3zM355 240l-16 6 2-6-2-6zM666 656l-16-4 5-3 2-6z"/></g>
  </svg>
</div>
</body>
</html>
```
FILE: styles.css
```css
* { box-sizing: border-box; }
body { margin: 0; background: #f0f0f0; }
.defs { display: block; position: absolute; }
.app {
  position: relative; display: flex; width: 1522px; height: 790px; overflow: hidden;
  font: 11px/13px "DejaVu Sans Condensed", "DejaVu Sans", sans-serif; letter-spacing: -.2px; color: #000;
}
.left { width: 363px; padding: 0 4px; display: flex; flex-direction: column; }
.panel { display: flex; flex-direction: column; }
.layers { height: 438px; margin-bottom: 5px; }
.browser { flex: 1; min-height: 0; }
.dock-title {
  height: 19px; flex: none; display: flex; align-items: center; gap: 6px; padding: 0 3px 0 0;
  background: #dadada; border: 1px solid #b6b6b6;
}
.dock-title span { flex: 1; padding-top: 1px; }
.dock-title svg { width: 10px; height: 10px; }
.tools { display: flex; align-items: center; height: 28px; flex: none; padding: 2px 0 0 1px; }
.tools i { width: 23px; display: flex; justify-content: center; }
.tools svg { width: 16px; height: 16px; }
.drop { width: 12px; height: 4px; background: #222; clip-path: polygon(2px 0, 10px 0, 6px 4px); }
.tree { flex: 1; min-height: 0; margin: 0; padding: 0; list-style: none; background: #fff; border: 1px solid #828790; width: 355px; overflow: hidden; }
.browser .tree { border-bottom: 0; padding-top: 1px; letter-spacing: -.25px; }
.tree li { display: flex; align-items: center; height: 18px; }
.arr { width: 10px; height: 10px; margin: 0 9px 0 4px; }
.tree .ico { width: 16px; height: 16px; margin-right: 5px; }
.tree .sub { padding-left: 43px; }
.layer-tree { font-weight: bold; letter-spacing: .26px; }
.layer-tree .chk { width: 14px; height: 14px; margin-right: 5px; }
.layer-tree .ico, .fill { margin-right: 6px !important; }
.layer-tree span { padding-top: 2px; }
.fill { width: 16px; height: 16px; background: #727a8c; border: 1px solid #5a6170; }
.on { background: linear-gradient(90deg, #fff 21px, #cce8ff 21px); box-shadow: inset 0 -1px #99d1ff; }
.on span { text-decoration: underline; }

.right { width: 1158px; display: flex; flex-direction: column; }
.status { margin: 0; height: 30px; text-align: center; padding-top: 12px; letter-spacing: -.05px; }
.card { height: 266px; margin: 0 9px 0 9px; background: #fff; border: 1px solid #828790; flex: none; }
.params { display: grid; grid-template-columns: 15px 130px 215px; grid-template-rows: 21px repeat(5, 30px) 80px; letter-spacing: -.15px; }
.params > div { display: flex; align-items: center; padding-top: 2px; }
.params .n { justify-content: center; border-right: 1px solid #e0e0e0; }
.params .h { justify-content: center; border-right: 1px solid #e0e0e0; }
.params .c { border-right: 1px solid #d8d8d8; border-bottom: 1px solid #d8d8d8; padding: 2px 20px 0 2px; }
.params .v { padding-left: 3px; }
.params .sel { background: #0078d7; color: #fff; }
.params .rest { background: #ececec; }
.strong { font-weight: bold; }
.h.strong { letter-spacing: .25px; }
.map { height: 475px; border: solid #828790; border-width: 1px 1px 0 1px; overflow: hidden; position: relative; z-index: 0; }
.map svg { display: block; }

.pale { fill: #f9f9f6; }
.field { fill: #f4f5e5; }
.urban { fill: #f6f4f3; }
.hill { fill: #ebe9e8; }
.faint { opacity: .6; }
.wood { fill: #d5eab6; }
.water { fill: #b5daf3; }
.green, .field2, .stream, .rail, .roadg, .roadw { fill: none; }
.green { stroke: #d8ebc0; stroke-width: 4; }
.field2 { stroke: #dddcd8; stroke-width: 4; }
.stream { stroke: #c5e1f5; stroke-width: 4; stroke-linejoin: round; }
.rail { stroke: #bfbfbf; stroke-width: 6; }
.roadg { stroke: #d6d6d6; stroke-width: 10; }
.roadw { stroke: #fdfdfd; stroke-width: 6; }
.cad path { fill: none; stroke: #d01010; stroke-width: 5.5; stroke-linejoin: round; }
.okrug path { fill: none; stroke: #d40000; stroke-width: 15; stroke-linejoin: round; }
.quarter { fill: #38c351; stroke: #0a820a; stroke-width: 10; stroke-linejoin: round; }
.places { font: 12px "Noto Sans", sans-serif; letter-spacing: 0; fill: #555; stroke: #fafaf6; stroke-width: 2px; paint-order: stroke; }
.places .river { font-style: italic; fill: #5a9fcb; }

.dialog {
  position: absolute; left: 359px; top: 227px; width: 1154px; height: 184px;
  display: flex; flex-direction: column; background: #f0f0f0; border: 1px solid #696969;
  box-shadow: 0 5px 16px rgba(0, 0, 0, .42);
}
.win-title { height: 31px; display: flex; align-items: center; background: #fff; padding: 0 9px 2px 8px; flex: none; font: 12px/16px "Noto Sans", sans-serif; letter-spacing: -.37px; }
.win-title span { flex: 1; padding-left: 8px; }
.logo { width: 16px; height: 16px; }
.win-btns { width: 110px; height: 14px; }
.dialog .tools { height: 25px; padding: 0 0 1px 1px; }
.dialog .tools u { width: 6px; height: 16px; background: linear-gradient(90deg, transparent 3px, #c4c4c4 3px, #c4c4c4 4px, transparent 4px); }
.grid-box { height: 101px; flex: none; border: 1px solid #828790; background: #fff; overflow: hidden; display: flex; flex-direction: column; }
.attrs { display: grid; grid-template-columns: 15px repeat(12, 100px); grid-template-rows: 21px 29px; flex: none; }
.attrs > div { display: flex; align-items: center; white-space: nowrap; overflow: hidden; padding-top: 2px; }
.rn { justify-content: center; }
.attrs .ah { justify-content: center; border: solid #fff; border-width: 0 3px; margin-right: 1px; box-shadow: 1px 0 #e0e0e0; letter-spacing: -.02px; }
.ac { background: #0078d7; color: #fff; border-right: 1px solid #d8d8d8; border-bottom: 1px solid #d8d8d8; padding-left: 3px; }
.null { font-style: italic; letter-spacing: -1px; padding-left: 3px; }
.cur { border: 2px solid #00f08c; padding-left: 1px; }
.gap { flex: 1; background: linear-gradient(90deg, #f0f0f0 15px, #fff 15px); }
.scroll { height: 16px; flex: none; display: flex; align-items: flex-start; background: #f0f0f0; padding: 0 3px; }
.scroll svg { width: 11px; height: 10px; margin-top: 2px; }
.scroll .flip { transform: scaleX(-1); }
.track { flex: 1; height: 15px; padding-left: 3px; }
.thumb { width: 472px; height: 15px; background: #cdcdcd; }
.foot { flex: 1; display: flex; align-items: center; padding: 0 4px 4px 4px; gap: 2px; }
.filter { width: 96px; height: 20px; display: flex; align-items: center; background: #e1e1e1; border: 1px solid #adadad; margin-right: auto; padding-left: 4px; letter-spacing: -.1px; }
.filter svg { width: 16px; height: 16px; margin-right: 3px; }
.filter b { align-self: flex-end; width: 6px; height: 3px; margin: 0 0 2px -2px; background: #000; clip-path: polygon(0 0, 6px 0, 3px 3px); }
.view { width: 21px; height: 20px; display: flex; align-items: center; justify-content: center; background: #e1e1e1; border: 1px solid #adadad; }
.view svg { width: 14px; height: 14px; }
.view.active { background: #cce4f7; border-color: #00549a; }

.arrows { position: absolute; left: 0; top: 0; width: 1522px; height: 790px; }
```
